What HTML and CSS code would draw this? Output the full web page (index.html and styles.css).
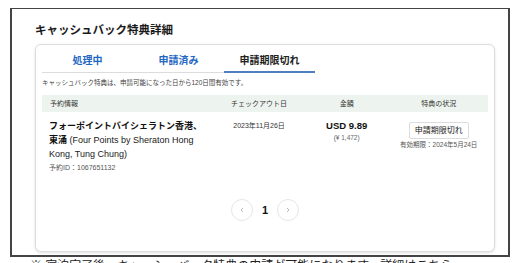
FILE: index.html
```html
<!DOCTYPE html>
<html lang="ja">
<head>
<meta charset="utf-8">
<title>キャッシュバック特典詳細</title>
<link rel="stylesheet" href="styles.css">
</head>
<body>
<div class="frame">
  <h1 class="title">キャッシュバック特典詳細</h1>
  <div class="card">
    <div class="tabs">
      <div class="tab">処理中</div>
      <div class="tab">申請済み</div>
      <div class="tab active">申請期限切れ</div>
    </div>
    <p class="notice">キャッシュバック特典は、申請可能になった日から120日間有効です。</p>
    <div class="table">
      <div class="thead">
        <div class="c1">予約情報</div>
        <div class="c2">チェックアウト日</div>
        <div class="c3">金額</div>
        <div class="c4">特典の状況</div>
      </div>
      <div class="trow">
        <div class="c1">
          <div class="hotel">フォーポイントバイシェラトン香港、東涌 <span class="latin">(Four Points by Sheraton Hong Kong, Tung Chung)</span></div>
          <div class="resid">予約ID：1067651132</div>
        </div>
        <div class="c2"><div class="date">2023年11月26日</div></div>
        <div class="c3">
          <div class="amount">USD 9.89</div>
          <div class="yen">(¥ 1,472)</div>
        </div>
        <div class="c4">
          <div class="status">申請期限切れ</div>
          <div class="expire">有効期限：2024年5月24日</div>
        </div>
      </div>
    </div>
    <div class="pager">
      <span class="pbtn"><svg width="6" height="6" viewBox="0 0 6 6"><polyline points="4,1 2,3 4,5" fill="none" stroke="#bbb" stroke-width="1"/></svg></span>
      <span class="pnum">1</span>
      <span class="pbtn"><svg width="6" height="6" viewBox="0 0 6 6"><polyline points="2,1 4,3 2,5" fill="none" stroke="#bbb" stroke-width="1"/></svg></span>
    </div>
  </div>
</div>
<p class="after">※ 宿泊完了後、キャッシュバック特典の申請が可能になります。詳細はこちら。</p>
</body>
</html>
```
FILE: styles.css
```css
* { box-sizing: border-box; }
html, body { margin: 0; padding: 0; background: #fff; }
body {
  font-family: "Liberation Sans", "Noto Sans CJK JP", sans-serif;
  color: #222;
  width: 520px;
  height: 263px;
  overflow: hidden;
}
.frame {
  margin: 8px 0 0 10px;
  width: 500px;
  border: 2px solid #444;
  border-top-width: 1px;
  padding: 12px 13px 3px 23px;
}
.title {
  margin: 0 0 5px;
  font-size: 11.5px;
  line-height: 18px;
  font-weight: bold;
  color: #1a1a1a;
}
.card {
  border: 1px solid #ddd;
  border-radius: 6px;
  box-shadow: 0 1px 3px rgba(0,0,0,0.12);
  padding: 0 6px 30px;
  background: #fff;
}
.tabs {
  display: flex;
  width: fit-content;
  border-bottom: 1px solid #dcdcdc;
}
.tab {
  width: 91px;
  text-align: center;
  font-size: 10px;
  font-weight: bold;
  line-height: 16px;
  padding: 8px 0 2px;
  color: #2467c2;
  border-bottom: 2px solid transparent;
  margin-bottom: -1px;
}
.tab.active {
  color: #222;
  border-bottom-color: #4f7fbf;
}
.notice {
  margin: 5px 0 0;
  font-size: 6.5px;
  line-height: 10px;
  color: #444;
}
.table { margin-top: 7px; }
.thead, .trow { display: flex; }
.thead {
  background: #edf3ee;
  height: 17px;
  font-size: 7px;
  line-height: 17px;
  color: #333;
}
.c1 { width: 173px; padding: 0 8px 0 7px; }
.c2 { width: 90px; text-align: center; }
.c3 { width: 86px; text-align: center; }
.c4 { width: 99px; text-align: center; }
.thead .c1 { padding-left: 8px; }
.trow { padding-top: 7px; }
.hotel {
  font-size: 9px;
  font-weight: bold;
  line-height: 14px;
  color: #111;
}
.hotel .latin {
  font-weight: normal;
  color: #1a1a1a;
}
.resid {
  margin-top: 2px;
  font-size: 7px;
  line-height: 10px;
  color: #555;
}
.date {
  font-size: 7px;
  line-height: 14px;
  color: #333;
}
.amount {
  font-size: 9.5px;
  font-weight: bold;
  line-height: 14px;
  color: #111;
}
.yen {
  font-size: 6.5px;
  line-height: 10px;
  color: #666;
}
.status {
  display: inline-block;
  margin-top: -1px;
  border: 1px solid #dcdcdc;
  border-radius: 2px;
  font-size: 8px;
  line-height: 15px;
  padding: 0 5px;
  color: #222;
}
.expire {
  margin-top: 1px;
  font-size: 6.5px;
  line-height: 10px;
  color: #555;
}
.pager {
  margin-top: 26px;
  display: flex;
  justify-content: center;
  align-items: center;
  gap: 9px;
}
.pbtn {
  width: 22px;
  height: 22px;
  border: 1px solid #e6e6e6;
  border-radius: 50%;
  display: flex;
  align-items: center;
  justify-content: center;
}
.pnum {
  font-size: 11px;
  font-weight: bold;
  color: #111;
}
.after {
  margin: 1px 0 0 30px;
  font-size: 12px;
  line-height: 16px;
  color: #222;
  white-space: nowrap;
}
```
